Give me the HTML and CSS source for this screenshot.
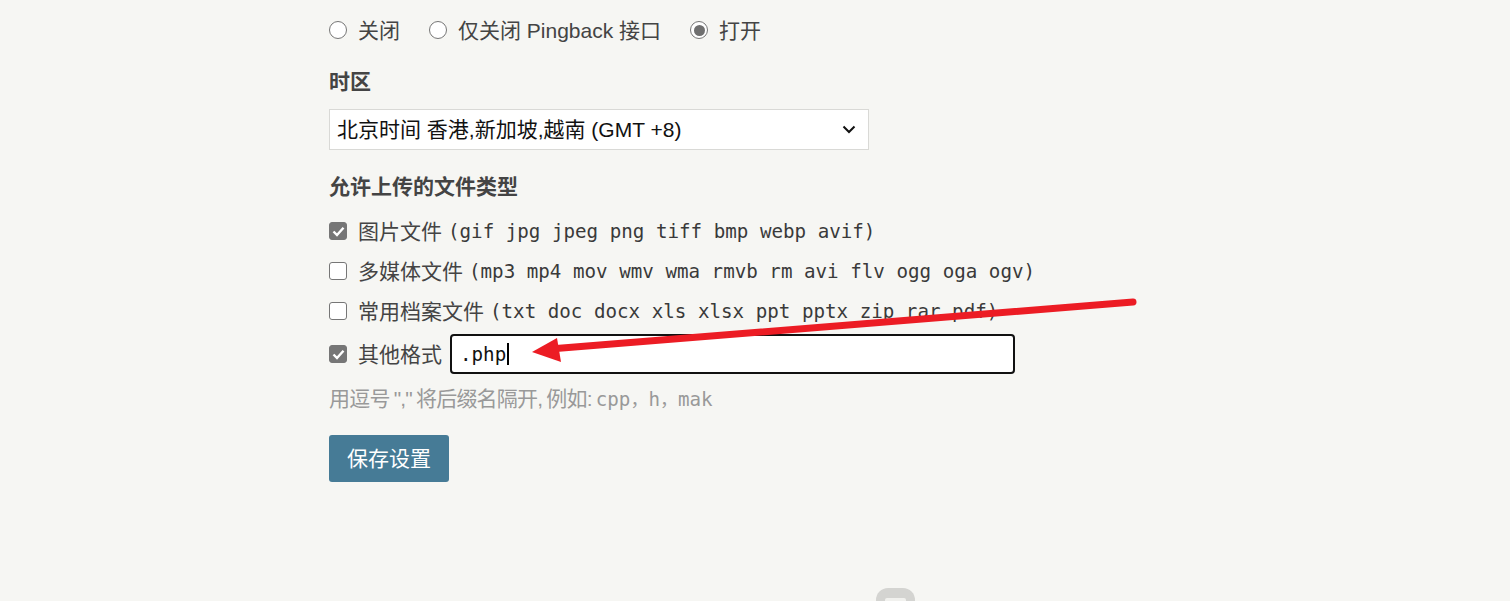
FILE: index.html
```html
<!DOCTYPE html>
<html lang="zh-CN">
<head>
<meta charset="utf-8">
<title>设置</title>
<link rel="stylesheet" href="styles.css">
</head>
<body>
<div class="page">
  <div class="radios">
    <span class="opt"><span class="radio"></span><span class="txt">关闭</span></span>
    <span class="opt"><span class="radio"></span><span class="txt">仅关闭 Pingback 接口</span></span>
    <span class="opt"><span class="radio on"></span><span class="txt">打开</span></span>
  </div>

  <div class="label l1">时区</div>
  <div class="select"><span>北京时间 香港,新加坡,越南 (GMT +8)</span>
    <svg class="chev" width="14" height="9" viewBox="0 0 14 9"><path d="M1.5 1.5 L7 7 L12.5 1.5" fill="none" stroke="#111" stroke-width="2"/></svg>
  </div>

  <div class="label l2">允许上传的文件类型</div>
  <div class="row first"><span class="cb on"><svg width="13" height="11" viewBox="0 0 13 11"><path d="M1.5 5.5 L5 9 L11.5 1.8" fill="none" stroke="#fff" stroke-width="2.4"/></svg></span><span class="cn txt">图片文件</span><span class="mono">(gif jpg jpeg png tiff bmp webp avif)</span></div>
  <div class="row"><span class="cb"></span><span class="cn txt">多媒体文件</span><span class="mono">(mp3 mp4 mov wmv wma rmvb rm avi flv ogg oga ogv)</span></div>
  <div class="row"><span class="cb"></span><span class="cn txt">常用档案文件</span><span class="mono">(txt doc docx xls xlsx ppt pptx zip rar pdf)</span></div>
  <div class="row other"><span class="cb on"><svg width="13" height="11" viewBox="0 0 13 11"><path d="M1.5 5.5 L5 9 L11.5 1.8" fill="none" stroke="#fff" stroke-width="2.4"/></svg></span><span class="cn txt">其他格式</span><span class="input"><span class="mono val">.php</span><span class="caret"></span></span></div>

  <div class="hint"><span class="hs">用逗号 "," 将后缀名隔开, 例如: </span><span class="mono">cpp<span class="fc">，</span>h<span class="fc">，</span>mak</span></div>

  <button class="btn">保存设置</button>

  <div class="foot"><span class="logo"><span class="logo-in"></span></span></div>
</div>

<svg class="arrow" width="1510" height="601" viewBox="0 0 1510 601">
  <line x1="1133" y1="302" x2="556" y2="348.5" stroke="#ec1c24" stroke-width="7" stroke-linecap="round"/>
  <polygon points="532,352 557,338 561,362" fill="#ec1c24"/>
</svg>
</body>
</html>
```
FILE: styles.css
```css
html, body {
  margin: 0;
  padding: 0;
  background: #f6f6f3;
  overflow: hidden;
}
body {
  position: relative;
  width: 1510px;
  height: 601px;
  font-family: "Liberation Sans", "Noto Sans CJK SC", sans-serif;
  font-size: 21px;
  color: #444;
}
.page {
  padding: 15px 0 0 329px;
}
.radios {
  display: flex;
  align-items: center;
  height: 30px;
}
.opt {
  display: flex;
  align-items: center;
  margin-right: 29px;
}
.txt {
  padding-bottom: 3px;
}
.radio {
  width: 16px;
  height: 16px;
  border: 1.5px solid #767676;
  border-radius: 50%;
  background: #fff;
  margin-right: 11px;
  position: relative;
  box-sizing: content-box;
}
.radio.on::after {
  content: "";
  position: absolute;
  left: 2.5px;
  top: 2.5px;
  width: 11px;
  height: 11px;
  border-radius: 50%;
  background: #6f6f6f;
}
.label {
  font-weight: bold;
  height: 30px;
  line-height: 27px;
}
.l1 { margin-top: 23px; }
.l2 { margin-top: 23px; }
.select {
  margin-top: 11px;
  width: 540px;
  height: 41px;
  box-sizing: border-box;
  border: 1px solid #d9d9d6;
  background: #fff;
  display: flex;
  align-items: center;
  justify-content: space-between;
  padding: 0 8px 3px 7px;
  color: #111;
}
.chev { margin-right: 4px; margin-top: 3px; }
.row {
  display: flex;
  align-items: center;
  height: 40px;
}
.row.first { margin-top: 8px; }
.row.other { height: 46px; }
.cb {
  width: 16px;
  height: 16px;
  border: 1.5px solid #767676;
  border-radius: 3px;
  background: #fff;
  margin-right: 11px;
  display: flex;
  align-items: center;
  justify-content: center;
  box-sizing: content-box;
}
.cb.on { background: #767676; }
.cn { margin-right: 6px; }
.mono {
  font-family: "DejaVu Sans Mono", "Noto Sans CJK SC", monospace;
  font-size: 19.2px;
}
.row .mono { color: #3a3a3a; }
.input {
  margin-left: 2px;
  width: 565px;
  height: 40px;
  box-sizing: border-box;
  border: 2px solid #111;
  border-radius: 4px;
  background: #fff;
  display: flex;
  align-items: center;
  padding-left: 8px;
  color: #111;
}
.input .mono { color: #111; }
.caret {
  width: 2px;
  height: 22px;
  background: #000;
  margin-left: 1px;
}
.hint {
  margin-top: 8px;
  height: 30px;
  line-height: 28px;
  color: #999;
}
.hs { word-spacing: -1px; letter-spacing: -0.8px; }
.fc { font-size: 18px; }
.btn {
  display: block;
  margin-top: 20px;
  width: 120px;
  height: 47px;
  border: none;
  border-radius: 3px;
  background: #467b96;
  color: #fff;
  font-family: "Liberation Sans", "Noto Sans CJK SC", sans-serif;
  font-size: 21px;
  padding: 0 0 3px;
}
.foot {
  margin-top: 106px;
  padding-left: 547px;
}
.logo {
  display: block;
  width: 39px;
  height: 40px;
  border-radius: 12px;
  background: #d4d4d1;
  position: relative;
}
.logo-in {
  position: absolute;
  left: 9px;
  top: 10px;
  width: 21px;
  height: 20px;
  background: #f1f1ee;
  border-radius: 2px;
}
.arrow {
  position: absolute;
  left: 0;
  top: 0;
  pointer-events: none;
}
```
